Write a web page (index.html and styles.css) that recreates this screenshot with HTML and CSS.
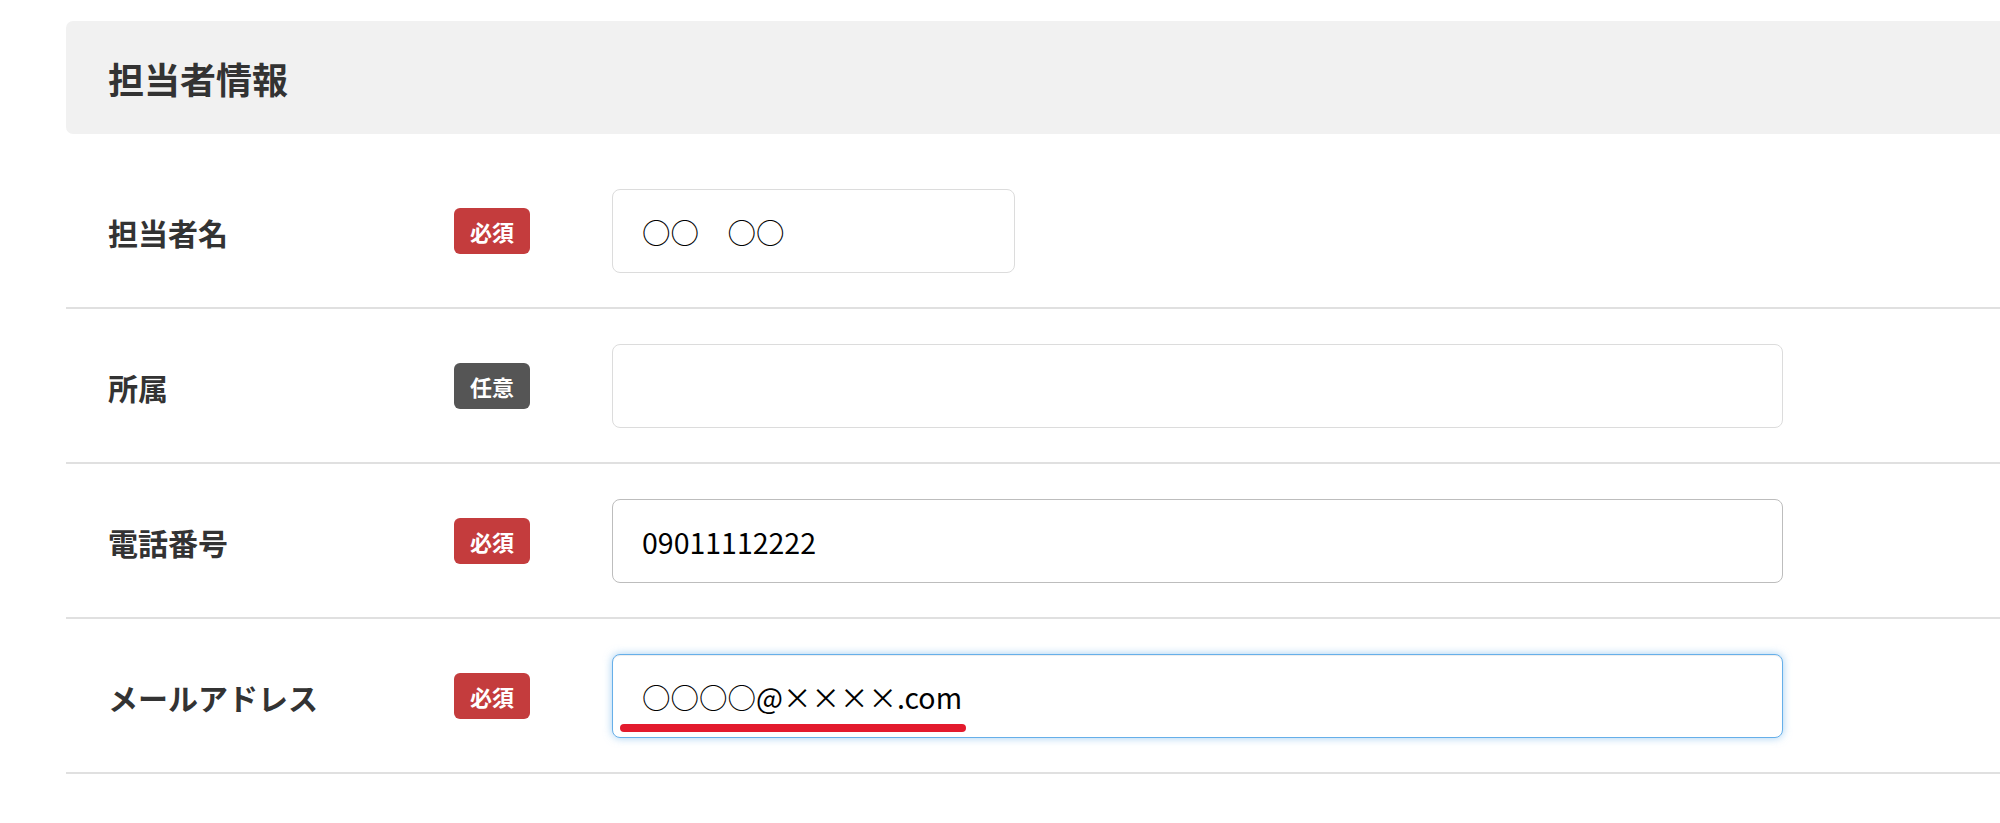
FILE: index.html
```html
<!DOCTYPE html>
<html lang="ja">
<head>
<meta charset="utf-8">
<title>担当者情報</title>
<link rel="stylesheet" href="styles.css">
</head>
<body>
<section class="panel">
  <h2 class="panel-title">担当者情報</h2>
  <div class="form-row">
    <div class="label">担当者名</div>
    <div class="badge-cell"><span class="badge badge-req">必須</span></div>
    <div class="field"><input class="input input-short" type="text" value="○○　○○"></div>
  </div>
  <div class="form-row">
    <div class="label">所属</div>
    <div class="badge-cell"><span class="badge badge-opt">任意</span></div>
    <div class="field"><input class="input" type="text" value=""></div>
  </div>
  <div class="form-row">
    <div class="label">電話番号</div>
    <div class="badge-cell"><span class="badge badge-req">必須</span></div>
    <div class="field"><input class="input input-hover" type="text" value="09011112222"></div>
  </div>
  <div class="form-row">
    <div class="label">メールアドレス</div>
    <div class="badge-cell"><span class="badge badge-req">必須</span></div>
    <div class="field field-annotated">
      <input class="input input-focus" type="text" value="○○○○@××××.com">
      <span class="underline-mark"></span>
    </div>
  </div>
</section>
</body>
</html>
```

FILE: styles.css
```css
html, body {
  margin: 0;
  padding: 0;
  background: #ffffff;
  overflow: hidden;
}

body {
  font-family: "Noto Sans CJK JP", "Noto Sans", sans-serif;
  color: #333333;
}

.panel {
  margin-left: 66px;
  width: 1960px;
  padding-top: 21px;
}

.panel-title {
  margin: 0 0 20px 0;
  height: 113px;
  box-sizing: border-box;
  background: #f1f1f1;
  border-radius: 7px;
  padding-left: 42px;
  display: flex;
  align-items: center;
  font-size: 36px;
  font-weight: 700;
  color: #333333;
  line-height: 1;
}

.form-row {
  display: grid;
  grid-template-columns: 346px 158px 1171px;
  align-items: center;
  padding: 35px 0 34px 42px;
  border-bottom: 2px solid #e0e0e0;
}

.label {
  font-size: 30px;
  font-weight: 700;
  color: #333333;
  line-height: 1;
  padding-top: 2px;
}

.badge-cell {
  display: flex;
  align-items: center;
}

.badge {
  display: inline-flex;
  align-items: center;
  justify-content: center;
  width: 76px;
  height: 46px;
  border-radius: 6px;
  color: #ffffff;
  font-size: 22px;
  font-weight: 700;
  line-height: 1;
}

.badge-req {
  background: #c43c3d;
}

.badge-opt {
  background: #555555;
}

.field {
  display: flex;
}

.field-annotated {
  position: relative;
}

.input {
  box-sizing: border-box;
  width: 1171px;
  height: 84px;
  margin: 0;
  padding: 0 20px 0 29px;
  border: 1px solid #dcdcdc;
  border-radius: 8px;
  background: #ffffff;
  font-family: "Noto Sans CJK JP", "Noto Sans", sans-serif;
  font-size: 28.5px;
  color: #000000;
  outline: none;
}

.input-short {
  width: 403px;
}

.input-hover {
  border-color: #bdbdbd;
}

.input-focus {
  border-color: #66afe9;
  box-shadow: inset 0 1px 1px rgba(0, 0, 0, 0.075), 0 0 8px rgba(102, 175, 233, 0.6);
}

.underline-mark {
  position: absolute;
  left: 8px;
  top: 70px;
  width: 346px;
  height: 8px;
  border-radius: 4px;
  background: #e31a2d;
}
```
